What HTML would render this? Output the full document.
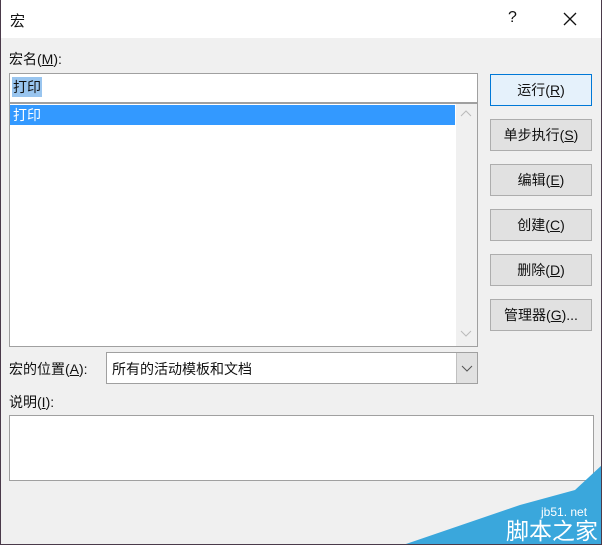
<!DOCTYPE html>
<html><head><meta charset="utf-8"><style>
*{margin:0;padding:0;box-sizing:border-box}
body{width:602px;height:545px;background:#f0f0f0;font-family:"Liberation Sans","Noto Sans CJK SC",sans-serif;font-size:14px;color:#111;position:relative;overflow:hidden}
.a{position:absolute}
.title{left:0;top:0;width:602px;height:38px;background:#fff}
.btn{position:absolute;left:490px;width:102px;height:32px;border:1px solid #adadad;background:#e1e1e1;text-align:center;line-height:30px;font-size:14px}
u{text-decoration:underline}
</style></head><body>
<div class="a title"></div>
<div class="a" style="left:10px;top:10px;font-size:15px">宏</div>
<div class="a" style="left:508px;top:9px;font-size:16px">?</div>
<svg class="a" style="left:563px;top:12px" width="14" height="14"><path d="M1 1L13 13M13 1L1 13" stroke="#111" stroke-width="1.3"/></svg>
<div class="a" style="left:9px;top:49px">宏名(<u>M</u>):</div>
<div class="a" style="left:9px;top:73px;width:469px;height:30px;background:#fff;border:1px solid #a0a0a0"></div>
<div class="a" style="left:12px;top:77px;background:#99c5ef;padding:0 1px;line-height:20px">打印</div>
<div class="a" style="left:9px;top:103px;width:469px;height:244px;background:#fff;border:1px solid #a0a0a0"></div>
<div class="a" style="left:10px;top:105px;width:445px;height:20px;background:#3399ff;color:#fff;padding-left:3px;line-height:20px">打印</div>
<div class="a" style="left:456px;top:104px;width:21px;height:242px;background:#f0f0f0"></div>
<svg class="a" style="left:460px;top:110px" width="12" height="8"><path d="M1 6L6 1L11 6" stroke="#bbb" fill="none"/></svg>
<svg class="a" style="left:460px;top:330px" width="12" height="8"><path d="M1 1L6 6L11 1" stroke="#bbb" fill="none"/></svg>
<div class="btn" style="top:74px;background:#e5f1fb;border-color:#0078d7">运行(<u>R</u>)</div>
<div class="btn" style="top:119px">单步执行(<u>S</u>)</div>
<div class="btn" style="top:164px">编辑(<u>E</u>)</div>
<div class="btn" style="top:209px">创建(<u>C</u>)</div>
<div class="btn" style="top:254px">删除(<u>D</u>)</div>
<div class="btn" style="top:299px">管理器(<u>G</u>)...</div>
<div class="a" style="left:9px;top:359px">宏的位置(<u>A</u>):</div>
<div class="a" style="left:106px;top:352px;width:372px;height:32px;background:#fff;border:1px solid #a0a0a0"></div>
<div class="a" style="left:112px;top:359px">所有的活动模板和文档</div>
<div class="a" style="left:456px;top:353px;width:21px;height:30px;background:#e1e1e1;border-left:1px solid #c0c0c0"></div>
<svg class="a" style="left:461px;top:365px" width="12" height="8"><path d="M1 1L6 6L11 1" stroke="#555" fill="none"/></svg>
<div class="a" style="left:9px;top:392px">说明(<u>I</u>):</div>
<div class="a" style="left:9px;top:415px;width:585px;height:66px;background:#fff;border:1px solid #a0a0a0"></div>
<svg class="a" style="left:400px;top:465px" width="202" height="80"><polygon points="202,0 202,80 3,80 120,40 175,25" fill="#3aa7dc"/></svg>
<div class="a" style="left:541px;top:505px;color:#fff;font-size:12px">jb51. net</div>
<div class="a" style="left:506px;top:518px;color:#fff;font-size:23px;line-height:26px">脚本之家</div>
<div class="a" style="left:0;top:0;width:1px;height:545px;background:#4a3a4a"></div>
<div class="a" style="right:0;top:0;width:1px;height:545px;background:#4a3a4a"></div>
<div class="a" style="left:0;bottom:0;width:602px;height:1px;background:#4a3a4a"></div>
</body></html>
